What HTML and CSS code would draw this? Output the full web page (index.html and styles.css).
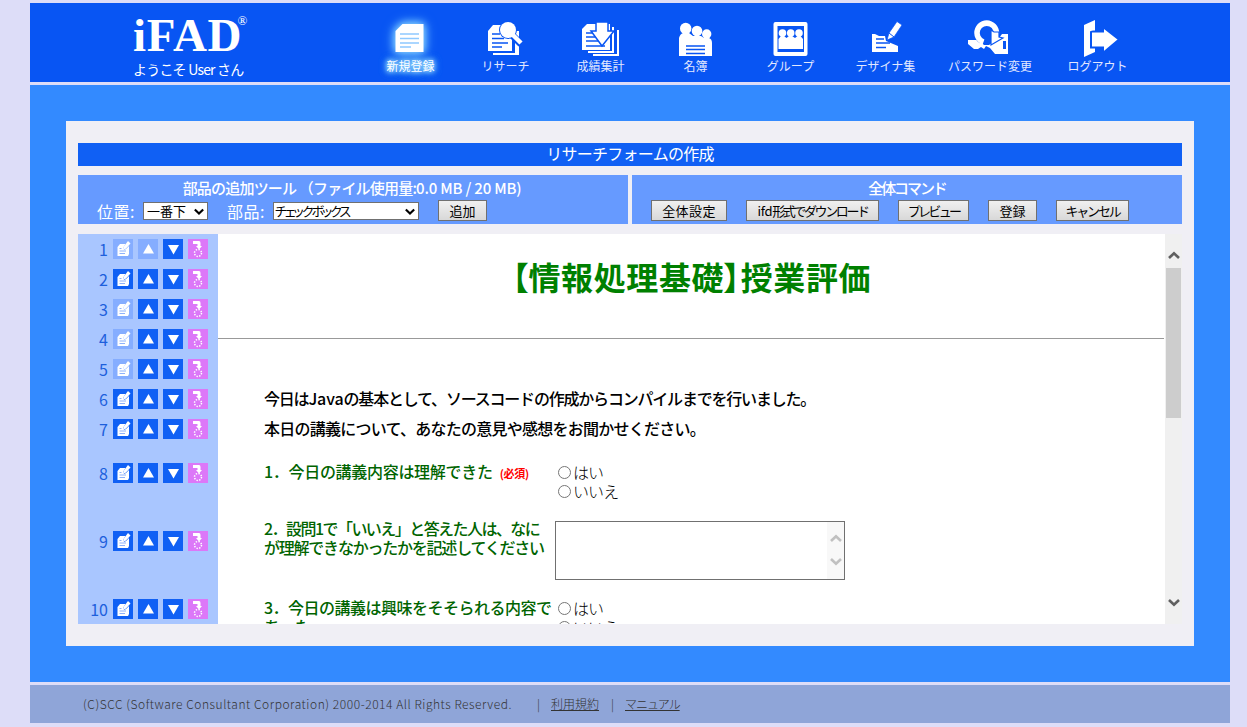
FILE: index.html
```
<!DOCTYPE html>
<html lang="ja">
<head>
  <meta charset="UTF-8">
  <title>iFAD</title>
  <link rel="stylesheet" href="styles.css">
</head>
<body>
  <!-- shared icons -->
  <svg class="defs" width="0" height="0">
    <symbol id="edit" viewBox="0 0 20 20">
      <path fill="#fff" d="M4.500 8L7 5H12.500L10 9L11 11L13 10L16 7V15L15 17H4.500Z"/>
      <path fill="#fff" d="M10.500 8L15 2L17.500 4.500L13 9.500L10 11Z"/>
      <path class="ink" d="M6.500 9.500H8.500M6.500 12H13M6.500 14.500H12"/>
    </symbol>
    <symbol id="up" viewBox="0 0 20 20"><path fill="#fff" d="M10.500 5L16 14.500H5Z"/></symbol>
    <symbol id="down" viewBox="0 0 20 20"><path fill="#fff" d="M5 6H16L10.500 15.500Z"/></symbol>
    <symbol id="del" viewBox="0 0 20 20">
      <path fill="#fff" d="M5 2H11Q12.500 2 12.500 4V7H14L11 10.500L8 7H9.500V5H5Z"/>
      <circle cx="10" cy="14" r="3.500" fill="none" stroke="#fff" stroke-width="1.500" stroke-dasharray="1.400 1.350"/>
    </symbol>
    <symbol id="chevron" viewBox="0 0 12 8"><path fill="none" stroke="currentColor" stroke-width="2.600" d="M1 1.500L6 6.300L11 1.500"/></symbol>
  </svg>

  <div class="header">
    <div class="brand">
      <div class="logo">iFAD<sup>®</sup></div>
      <div class="welcome">ようこそ <span>User</span> さん</div>
    </div>
    <div class="nav">
      <a class="active">
        <svg viewBox="0 0 40 40"><path fill="#fff" d="M4.500 13L11.500 6H32.500V34H4.500Z"/><path stroke="#8fc9ff" stroke-width="1.700" d="M9 16H28M9 20.500H28M9 25H28M9 29H20"/></svg>
        <span>新規登録</span>
      </a>
      <a>
        <svg viewBox="0 0 40 40"><path fill="#fff" d="M7 35H29V13H33V37H7Z"/><path fill="#fff" d="M2 13L7 7H26V33H2Z"/><path stroke="#0855f3" stroke-width="1.500" d="M6 16H14M6 20.500H18M6 25H22M6 29H16"/><path stroke="#0855f3" stroke-width="7" d="M26 17L35 26"/><circle cx="22" cy="12" r="9" fill="#0855f3"/><circle cx="22" cy="12" r="8" fill="#fff"/><path stroke="#fff" stroke-width="4.500" d="M25 15L35 25"/></svg>
        <span>リサーチ</span>
      </a>
      <a>
        <svg viewBox="0 0 40 40"><path fill="#fff" d="M12 36H36V12H38V38H12Z"/><path fill="#fff" d="M7 33H31V9H33V35H7Z"/><path fill="#fff" d="M1 11L6 6H29V32H1Z"/><path stroke="#0855f3" stroke-width="1.500" d="M5 15H14M5 19H14M5 23H18M5 28H24"/><path fill="#fff" stroke="#0855f3" stroke-width="1.500" d="M15 4H27V13H33L21 28L10 13H15Z"/></svg>
        <span>成績集計</span>
      </a>
      <a>
        <svg viewBox="0 0 40 40"><path fill="#fff" d="M3 38V20Q4 16 7 15H13L17 18H25L28 20H33Q36 21 36 25V38Z"/><circle cx="9.700" cy="10.500" r="5.700" fill="#fff"/><circle cx="21" cy="13" r="5.300" fill="#fff"/><circle cx="30.700" cy="16" r="4.700" fill="#fff"/><path stroke="#0855f3" stroke-width="1.600" d="M10 28H29M10 31.500H29M10 35.500H29"/></svg>
        <span>名簿</span>
      </a>
      <a>
        <svg viewBox="0 0 40 40"><rect x="2.500" y="4" width="34" height="34" rx="2" fill="#fff"/><path fill="#0855f3" d="M6.500 8H33V34H6.500Z"/><g fill="#fff"><circle cx="11.500" cy="15" r="3.800"/><circle cx="19.700" cy="15" r="3.800"/><circle cx="28" cy="15" r="3.800"/><path d="M7.500 21L10 18H13L15.500 20L18 18H21L24 20L26.500 18H29.500L32 21V31H7.500Z"/></g></svg>
        <span>グループ</span>
      </a>
      <a>
        <svg viewBox="0 0 40 40"><path fill="#fff" d="M6 16H9L13 18H19L20 23L32 28V34H6Z"/><path stroke="#0855f3" stroke-width="1.500" d="M10 21H18M10 25H24M10 29.500H20"/><path fill="#fff" stroke="#0855f3" stroke-width=".7" d="M31 3.500L36 7L28 19L21 22L23 15Z"/><path stroke="#0855f3" d="M23 15L28 19"/></svg>
        <span>デザイナ集</span>
      </a>
      <a class="wide">
        <svg viewBox="0 0 40 40"><path fill="#fff" d="M-4 22H7L12 27H17L27 20L30 16H36V36H23L18 30L14 28L12 31L9 29L6 31L2 31L-4 26Z"/><path fill="none" stroke="#0855f3" stroke-width="7.500" d="M10 22A9.500 9.500 0 1 1 23 19"/><path fill="none" stroke="#fff" stroke-width="5.500" d="M11.500 24A9.700 9.700 0 1 1 23.500 19"/><path fill="#fff" stroke="#0855f3" stroke-width="1.200" d="M19 12V27L31 20L27 19V14H22Z"/><path fill="#0855f3" d="M31 23H34V31H31Z"/></svg>
        <span>パスワード変更</span>
      </a>
      <a>
        <svg viewBox="0 0 40 40"><path fill="#fff" d="M6 7L17 2V34L6 39Z"/><path fill="#fff" stroke="#0855f3" stroke-width="2" d="M13 14Q13 13.500 15 13.500H25V9L41 21.500L25 35V29.500H13Z"/></svg>
        <span>ログアウト</span>
      </a>
    </div>
  </div>

  <div class="main">
    <div class="panel">
      <div class="title-bar"><span>リサーチフォームの作成</span></div>

      <div class="tools">
        <div class="tool-box">
          <div class="tool-title file-usage">部品の追加ツール （ファイル使用量:<span>0.0 MB / 20 MB)</span></div>
          <div class="tool-row">
            <label>位置:</label>
            <div class="select pos">
              <select><option>一番下</option></select>
              <svg><use href="#chevron"/></svg>
            </div>
            <label class="parts">部品:</label>
            <div class="select part">
              <select><option>チェックボックス</option></select>
              <svg><use href="#chevron"/></svg>
            </div>
            <button class="w49 add">追加</button>
          </div>
        </div>
        <div class="tool-box">
          <div class="tool-title command">全体コマンド</div>
          <div class="tool-row commands">
            <button class="w76">全体設定</button>
            <button class="w133"><span>ifd</span>形式でダウンロード</button>
            <button class="w71">プレビュー</button>
            <button class="w49">登録</button>
            <button class="w73">キャンセル</button>
          </div>
        </div>
      </div>

      <div class="editor">
        <div class="side" id="side"></div>
        <div class="form">
          <h1>【情報処理基礎】授業評価</h1>
          <hr>
          <p class="text1">今日は<span>Java</span>の基本として、ソースコードの作成からコンパイルまでを行いました。</p>
          <p class="text2">本日の講義について、あなたの意見や感想をお聞かせください。</p>

          <div class="question q1">
            <div class="label">1．今日の講義内容は理解できた<span class="required">(必須)</span></div>
            <div class="answer">
              <label><input type="radio" name="q1">はい</label>
              <label><input type="radio" name="q1">いいえ</label>
            </div>
          </div>
          <div class="question q2">
            <div class="label"><span class="line1">2．設問1で「いいえ」と答えた人は、なに</span><br><span class="line2">が理解できなかったかを記述してください</span></div>
            <div class="textbox">
              <div class="textbox-scroll">
                <svg class="flip"><use href="#chevron"/></svg>
                <svg><use href="#chevron"/></svg>
              </div>
            </div>
          </div>
          <div class="question q3">
            <div class="label">3．今日の講義は興味をそそられる内容で<br>あった</div>
            <div class="answer">
              <label><input type="radio" name="q3">はい</label>
              <label><input type="radio" name="q3">いいえ</label>
            </div>
          </div>
        </div>
        <div class="scrollbar">
          <svg class="flip"><use href="#chevron"/></svg>
          <div class="thumb"></div>
          <svg><use href="#chevron"/></svg>
        </div>
      </div>
    </div>
  </div>

  <div class="footer">
    <span class="copy">(C)SCC (Software Consultant Corporation) 2000-2014 All Rights Reserved.</span>
    <span class="bar">|</span>
    <a>利用規約</a>
    <span class="bar">|</span>
    <a class="manual">マニュアル</a>
  </div>

  <script>
    // rows whose edit button is disabled
    const noEdit = [1, 3, 4, 5];
    const side = document.getElementById('side');
    for (let i = 1; i <= 10; i++) {
      const row = document.createElement('div');
      row.className = 'side-row row' + i;
      row.innerHTML = `
        <span class="num">${i}</span>
        <svg class="ico ${noEdit.includes(i) ? 'off' : ''}"><use href="#edit"/></svg>
        <svg class="ico ${i === 1 ? 'off' : ''}"><use href="#up"/></svg>
        <svg class="ico"><use href="#down"/></svg>
        <svg class="ico del"><use href="#del"/></svg>
      `;
      side.appendChild(row);
    }
  </script>
</body>
</html>
```
FILE: styles.css
```
* {
  box-sizing: border-box;
}
body {
  margin: 0;
  padding: 3px 17px 4px 30px;
  width: 1247px;
  height: 727px;
  overflow: hidden;
  background-color: #ddddf8;
  font-family: "Noto Sans CJK JP", sans-serif;
  font-size: 16px;
  white-space: nowrap;
}
.defs {
  position: absolute;
}
.header {
  display: flex;
  height: 79px;
  background-color: #0855f3;
  color: white;
}
.brand {
  width: 333px;
  padding-left: 103px;
}
.logo {
  height: 54px;
  padding-top: 5px;
  font: bold 47px/54px "Liberation Serif", serif;
  letter-spacing: 0.8px;
}
.logo sup {
  display: inline-block;
  margin-left: -5px;
  font-size: 13px;
  font-weight: normal;
  line-height: 13px;
  vertical-align: 26px;
}
.welcome {
  font-size: 14px;
  line-height: 24px;
  letter-spacing: -0.8px;
}
.nav {
  display: flex;
}
.nav a {
  display: flex;
  flex-direction: column;
  align-items: center;
  width: 95px;
  padding-top: 15px;
  font-size: 12px;
  line-height: 16px;
  color: #e3e8ff;
}
.nav a.wide {
  width: 117px;
}
.nav a.wide span {
  margin-right: 3px;
}
.nav svg {
  width: 40px;
  height: 40px;
  overflow: visible;
}
.nav .active {
  color: white;
}
.nav .active svg {
  filter: drop-shadow(0 0 4px #8fd8ff) drop-shadow(0 0 5px #66bbff);
}
.nav .active span {
  text-shadow: 0 0 4px #8fd2ff, 0 0 5px #8fd2ff, 0 0 6px #6fc0ff, 0 0 9px #5fb5ff, 0 0 9px #5fb5ff;
}
.main {
  height: 597px;
  margin: 3px 0;
  padding: 36px;
  background-color: #338aff;
}
.panel {
  height: 525px;
  padding: 22px 12px;
  background-color: #f0eff5;
}
.title-bar {
  height: 23px;
  line-height: 21px;
  background-color: #1060f4;
  color: white;
  text-align: center;
  letter-spacing: -0.75px;
}
.tools {
  display: flex;
  gap: 4px;
  margin-top: 9px;
}
.tool-box {
  width: 550px;
  height: 49px;
  background-color: #669aff;
  color: white;
}
.tool-title {
  height: 25px;
  font-size: 15px;
  font-weight: 500;
  line-height: 25px;
  text-align: center;
  letter-spacing: -0.8px;
}
.file-usage {
  padding-right: 2px;
}
.file-usage span {
  letter-spacing: -0.2px;
}
.command {
  letter-spacing: -2.1px;
}
.tool-row {
  display: flex;
  align-items: center;
  height: 21px;
  padding-left: 19px;
}
.tool-row > label {
  width: 46px;
  line-height: 20px;
  letter-spacing: 0.5px;
}
.tool-row > label.parts {
  margin-left: 19px;
}
.select {
  position: relative;
  height: 18px;
}
.select.pos {
  width: 65px;
}
.select.part {
  width: 146px;
}
.select select {
  display: block;
  width: 100%;
  height: 18px;
  padding: 0 0 0 3px;
  appearance: none;
  border: 1px solid #707070;
  border-radius: 0;
  background-color: white;
  color: black;
  font: 13px/15px "Noto Sans CJK JP", sans-serif;
}
.select.part select {
  padding-left: 1px;
  font-feature-settings: "palt";
  letter-spacing: -2px;
}
.select svg {
  position: absolute;
  right: 4px;
  top: 6px;
  width: 10px;
  height: 7px;
  color: black;
}
button {
  height: 21px;
  padding: 0;
  border: 1px solid #707070;
  background: linear-gradient(#f0f0f0, #d8d8d8);
  color: black;
  font: 13px/17px "Noto Sans CJK JP", sans-serif;
  text-align: center;
}
.add {
  margin-left: 19px;
}
.commands {
  gap: 19px;
}
.w49 {
  width: 49px;
}
.w71 {
  width: 71px;
  letter-spacing: -2.7px;
}
.w73 {
  width: 73px;
  letter-spacing: -2.2px;
}
.w76 {
  width: 76px;
  letter-spacing: 0.4px;
}
.w133 {
  width: 133px;
  letter-spacing: -2.4px;
}
.w133 span {
  letter-spacing: -0.3px;
}
.editor {
  display: flex;
  height: 390px;
  margin-top: 10px;
  overflow: hidden;
  background-color: white;
}
.side {
  width: 140px;
  background-color: #a9c6ff;
}
.side-row {
  display: flex;
  align-items: center;
  gap: 5px;
  height: 30px;
}
.row8, .row10 {
  height: 58px;
}
.row9 {
  height: 78px;
}
.num {
  width: 30px;
  color: #1d5fdc;
  text-align: right;
  line-height: 28px;
}
.ico {
  width: 20px;
  height: 20px;
  background-color: #1060f4;
}
.ico.off {
  background-color: #85adff;
}
.ico.del {
  background-color: #dc78f8;
}
.ink {
  stroke: #8fb2fa;
}
.form {
  width: 947px;
}
.form h1 {
  height: 104px;
  margin: 0;
  padding-top: 20px;
  color: green;
  font-size: 32px;
  line-height: 44px;
  text-align: center;
  font-feature-settings: "palt";
  letter-spacing: 0.6px;
}
.form hr {
  height: 1px;
  margin: 0 1px 0 0;
  border: 0;
  background-color: #999;
}
.form p {
  height: 30px;
  margin: 0 0 0 46px;
  line-height: 28px;
  font-weight: 500;
}
.form .text1 {
  margin-top: 45px;
  letter-spacing: -1.2px;
}
.form .text1 span {
  letter-spacing: -0.1px;
}
.form .text2 {
  letter-spacing: -0.75px;
}
.question {
  display: flex;
  padding-left: 46px;
  line-height: 19px;
}
.label {
  width: 291px;
  color: #006400;
  font-weight: 500;
}
.q1 {
  height: 58px;
  padding-top: 18px;
}
.q1 .label {
  letter-spacing: -0.3px;
}
.required {
  margin-left: 7px;
  color: red;
  font-size: 11px;
  font-weight: bold;
}
.q2 {
  height: 78px;
  padding-top: 18px;
}
.q2 .label {
  margin-top: -1px;
}
.line1 {
  letter-spacing: -1.55px;
}
.line2 {
  letter-spacing: -1.22px;
}
.q3 {
  padding-top: 18px;
}
.q3 .label {
  letter-spacing: -0.5px;
}
.answer {
  padding-top: 1px;
}
.answer label {
  display: flex;
  align-items: center;
  height: 19px;
  font-weight: 300;
  letter-spacing: -0.9px;
}
.answer input {
  width: 13px;
  height: 13px;
  margin: 0 2px 0 3px;
}
.textbox {
  display: flex;
  justify-content: flex-end;
  width: 290px;
  height: 59px;
  margin-top: 1px;
  border: 1px solid #707070;
}
.textbox-scroll {
  display: flex;
  flex-direction: column;
  align-items: center;
  gap: 14px;
  width: 17px;
  padding-top: 12px;
  background-color: #f8f8f8;
  color: #c0c0c0;
}
.textbox-scroll svg, .scrollbar svg {
  width: 12px;
  height: 9px;
}
.flip {
  transform: scaleY(-1);
}
.scrollbar {
  display: flex;
  flex-direction: column;
  align-items: center;
  justify-content: space-between;
  width: 17px;
  padding: 17px 0;
  background-color: #f0f0f0;
  color: #606060;
}
.thumb {
  width: 15px;
  height: 150px;
  margin-top: 8px;
  margin-bottom: auto;
  background-color: #cdcdcd;
}
.footer {
  display: flex;
  height: 38px;
  padding-left: 53px;
  background-color: #8fa5d8;
  color: #333;
  font-size: 12px;
  font-weight: 300;
  line-height: 37px;
}
.copy {
  width: 454px;
  letter-spacing: 0.54px;
}
.bar {
  width: 14px;
}
.footer a {
  width: 60px;
  text-decoration: underline;
}
.footer .manual {
  letter-spacing: -1px;
}
```
